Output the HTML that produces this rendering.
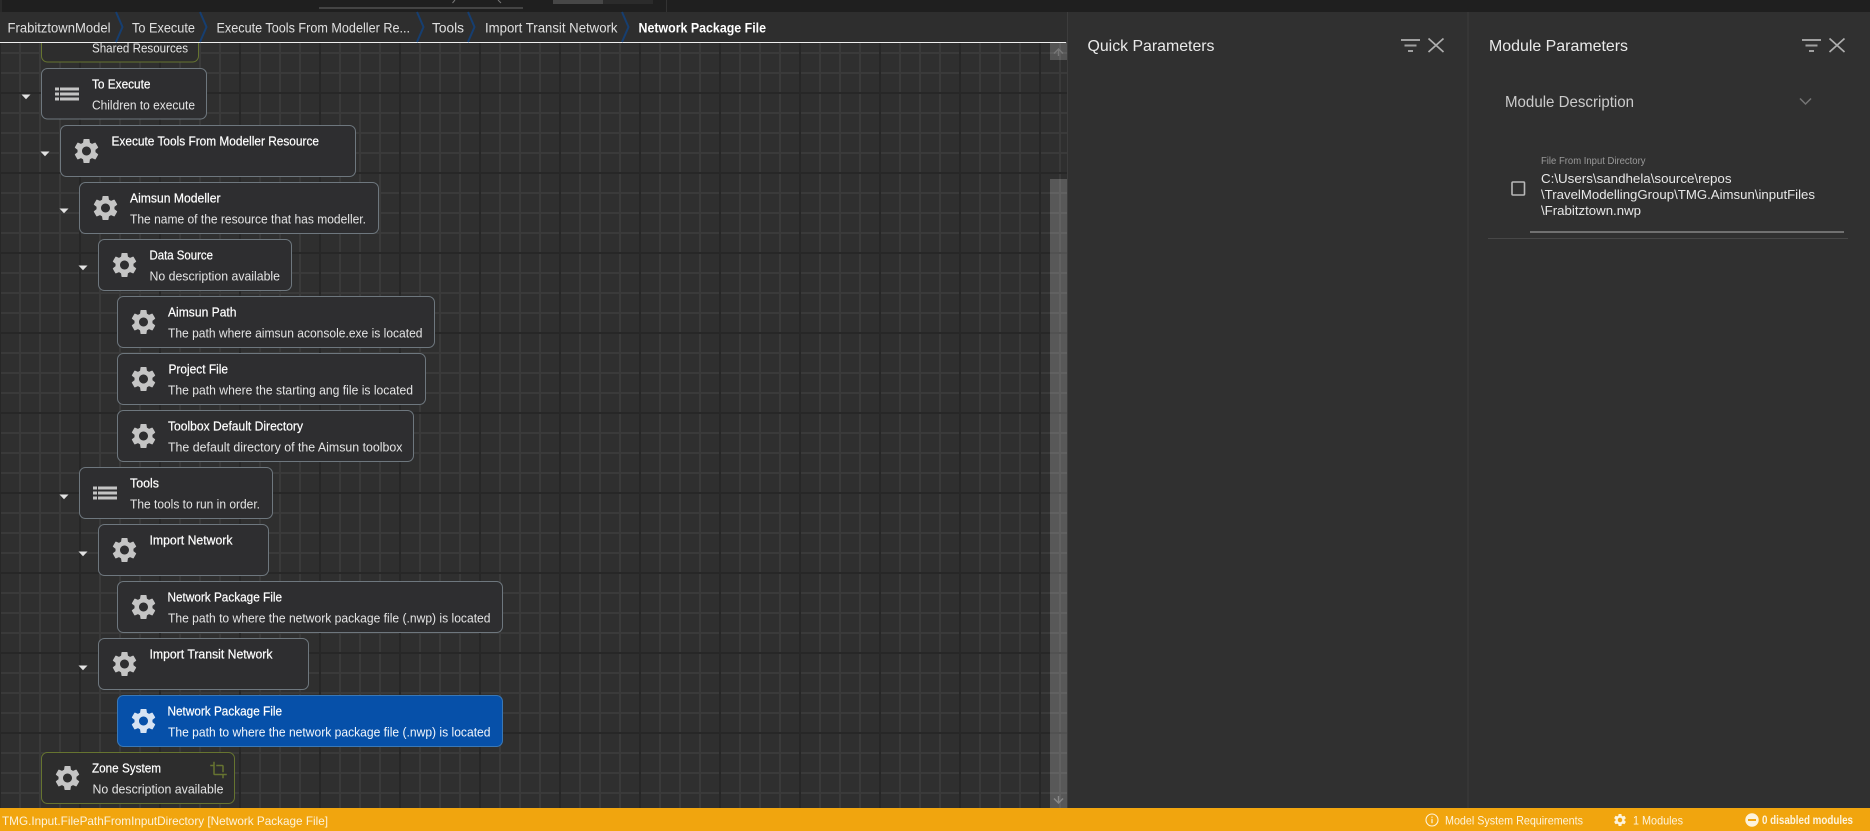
<!DOCTYPE html>
<html lang="en"><head><meta charset="utf-8"><title>Network Package File</title>
<style>
html,body{margin:0;padding:0;width:1870px;height:831px;overflow:hidden;background:#303030}
svg{display:block}
text{font-family:"Liberation Sans",sans-serif;white-space:pre}
.t{font-size:12.5px;fill:#fff;stroke:#fff;stroke-width:.2}
.d{font-size:12.5px;fill:#e4e4e4}
.b{font-size:14px;fill:#e0e0e0}
.p{font-size:16px;fill:#eaeaea}
.s{font-size:12px;fill:#fdf3dc}
.n{fill:#2e2e30;stroke:#6e777e;stroke-width:1}
.o{fill:#2d2d2d;stroke:#667430;stroke-width:1}
</style></head>
<body>
<svg xmlns="http://www.w3.org/2000/svg" width="1870" height="831" viewBox="0 0 1870 831">
<defs>
<pattern id="grid" x="0" y="13" width="80" height="80" patternUnits="userSpaceOnUse">
<rect width="80" height="80" fill="#2f2f2f"/>
<rect x="19" width="2" height="80" fill="#3a3a3a"/><rect x="39" width="2" height="80" fill="#3a3a3a"/><rect x="59" width="2" height="80" fill="#3a3a3a"/>
<rect y="19" width="80" height="2" fill="#3a3a3a"/><rect y="39" width="80" height="2" fill="#3a3a3a"/><rect y="59" width="80" height="2" fill="#3a3a3a"/>
<rect x="79" width="1" height="80" fill="#272727"/><rect x="0" width="1" height="80" fill="#272727"/>
<rect y="79" width="80" height="1" fill="#272727"/><rect y="0" width="80" height="1" fill="#272727"/>
</pattern>
<g id="g" transform="scale(1.25) translate(-12,-12)"><path d="M19.14 12.94c.04-.3.06-.61.06-.94 0-.32-.02-.64-.07-.94l2.03-1.58c.18-.14.23-.41.12-.61l-1.92-3.32c-.12-.22-.37-.29-.59-.22l-2.39.96c-.5-.38-1.03-.7-1.62-.94l-.36-2.54c-.04-.24-.24-.41-.48-.41h-3.84c-.24 0-.43.17-.47.41l-.36 2.54c-.59.24-1.13.57-1.62.94l-2.39-.96c-.22-.08-.47 0-.59.22L2.74 8.87c-.12.21-.08.47.12.61l2.03 1.58c-.05.3-.09.63-.09.94s.02.64.07.94l-2.03 1.58c-.18.14-.23.41-.12.61l1.92 3.32c.12.22.37.29.59.22l2.39-.96c.5.38 1.03.7 1.62.94l.36 2.54c.05.24.24.41.48.41h3.84c.24 0 .44-.17.47-.41l.36-2.54c.59-.24 1.13-.56 1.62-.94l2.39.96c.22.08.47 0 .59-.22l1.92-3.32c.12-.22.07-.47-.12-.61l-2.01-1.58zM12 15.6c-1.98 0-3.6-1.62-3.6-3.6s1.62-3.6 3.6-3.6 3.6 1.62 3.6 3.6-1.62 3.6-3.6 3.6z"/></g>
<g id="l"><rect x="-12" y="-6.5" width="4" height="3"/><rect x="-7" y="-6.5" width="19" height="3"/><rect x="-12" y="-1.5" width="4" height="3"/><rect x="-7" y="-1.5" width="19" height="3"/><rect x="-12" y="3.5" width="4" height="3"/><rect x="-7" y="3.5" width="19" height="3"/></g>
<path id="a" d="M-4.5 0H4.5L0 4.8Z" fill="#e2e2e2"/>
<g id="f" fill="#a0a0a0"><rect x="0" y="0" width="19" height="2"/><rect x="3.5" y="5.5" width="12" height="2"/><rect x="7" y="11" width="5" height="2"/></g>
<path id="x" d="M0 0L15 13.5M15 0L0 13.5" stroke="#aeaeae" stroke-width="1.7" fill="none"/>
<path id="c" d="M-3 0L3.5 15L-3 30" fill="none" stroke="#163e70" stroke-width="2"/>
</defs>

<rect width="1870" height="831" fill="#303030"/>
<rect x="0" y="12" width="1067" height="796" fill="url(#grid)"/>

<g>
<rect class="o" x="41.5" y="11.5" width="157" height="50.5" rx="6"/>
<rect class="n" x="41.5" y="68.5" width="165" height="50.5" rx="6"/>
<rect class="n" x="60.5" y="125.5" width="295" height="51" rx="6"/>
<rect class="n" x="79.5" y="182.5" width="299" height="51" rx="6"/>
<rect class="n" x="98.5" y="239.5" width="193" height="51" rx="6"/>
<rect class="n" x="117.5" y="296.5" width="317" height="51" rx="6"/>
<rect class="n" x="117.5" y="353.5" width="308" height="51" rx="6"/>
<rect class="n" x="117.5" y="410.5" width="296" height="51" rx="6"/>
<rect class="n" x="79.5" y="467.5" width="193" height="51" rx="6"/>
<rect class="n" x="98.5" y="524.5" width="170" height="51" rx="6"/>
<rect class="n" x="117.5" y="581.5" width="385" height="51" rx="6"/>
<rect class="n" x="98.5" y="638.5" width="210" height="51" rx="6"/>
<rect x="117.5" y="695.5" width="385" height="51" rx="6" fill="#0650a9" stroke="#3a78b6"/>
<rect class="o" x="41.5" y="752.5" width="193" height="51" rx="6"/>
</g>

<g fill="#c4c4c4">
<use href="#l" x="67" y="94"/>
<use href="#g" x="86.5" y="151"/>
<use href="#g" x="105.5" y="208"/>
<use href="#g" x="124.5" y="265"/>
<use href="#g" x="143.5" y="322"/>
<use href="#g" x="143.5" y="379"/>
<use href="#g" x="143.5" y="436"/>
<use href="#l" x="105" y="493"/>
<use href="#g" x="124.5" y="550"/>
<use href="#g" x="143.5" y="607"/>
<use href="#g" x="124.5" y="664"/>
<use href="#g" x="67.5" y="778"/>
</g>
<use href="#g" x="143.5" y="721" fill="#d6e3f3"/>
<path transform="translate(209.5,761) scale(.75)" fill="#667430" d="M17,15H19V7C19,5.9 18.1,5 17,5H9V7H17V15M7,17V1H5V5H1V7H5V17A2,2 0 0,0 7,19H17V23H19V19H23V17H7Z"/>

<use href="#a" x="26" y="94.5"/>
<use href="#a" x="45" y="151.5"/>
<use href="#a" x="64" y="208.5"/>
<use href="#a" x="83" y="265.5"/>
<use href="#a" x="64" y="494.5"/>
<use href="#a" x="83" y="551.5"/>
<use href="#a" x="83" y="665.5"/>

<text class="d" x="92" y="52.5" textLength="96" lengthAdjust="spacingAndGlyphs">Shared Resources</text>
<text class="t" x="92" y="88.5" textLength="58.5" lengthAdjust="spacingAndGlyphs">To Execute</text>
<text class="d" x="92" y="109.5" textLength="103" lengthAdjust="spacingAndGlyphs">Children to execute</text>
<text class="t" x="111.5" y="145.5" textLength="207.5" lengthAdjust="spacingAndGlyphs">Execute Tools From Modeller Resource</text>
<text class="t" x="130" y="202.5" textLength="90.5" lengthAdjust="spacingAndGlyphs">Aimsun Modeller</text>
<text class="d" x="130" y="223.5" textLength="236" lengthAdjust="spacingAndGlyphs">The name of the resource that has modeller.</text>
<text class="t" x="149.5" y="259.5" textLength="63.5" lengthAdjust="spacingAndGlyphs">Data Source</text>
<text class="d" x="149.5" y="280.5" textLength="130.5" lengthAdjust="spacingAndGlyphs">No description available</text>
<text class="t" x="168" y="316.5" textLength="68.5" lengthAdjust="spacingAndGlyphs">Aimsun Path</text>
<text class="d" x="168" y="337.5" textLength="254.5" lengthAdjust="spacingAndGlyphs">The path where aimsun aconsole.exe is located</text>
<text class="t" x="168.5" y="373.5" textLength="59.5" lengthAdjust="spacingAndGlyphs">Project File</text>
<text class="d" x="168" y="394.5" textLength="245" lengthAdjust="spacingAndGlyphs">The path where the starting ang file is located</text>
<text class="t" x="168" y="430.5" textLength="135" lengthAdjust="spacingAndGlyphs">Toolbox Default Directory</text>
<text class="d" x="168" y="451.5" textLength="234.5" lengthAdjust="spacingAndGlyphs">The default directory of the Aimsun toolbox</text>
<text class="t" x="130" y="487.5" textLength="29" lengthAdjust="spacingAndGlyphs">Tools</text>
<text class="d" x="130" y="508.5" textLength="130" lengthAdjust="spacingAndGlyphs">The tools to run in order.</text>
<text class="t" x="149.5" y="544.5" textLength="83" lengthAdjust="spacingAndGlyphs">Import Network</text>
<text class="t" x="167.5" y="601.5" textLength="114.5" lengthAdjust="spacingAndGlyphs">Network Package File</text>
<text class="d" x="168" y="622.5" textLength="322.5" lengthAdjust="spacingAndGlyphs">The path to where the network package file (.nwp) is located</text>
<text class="t" x="149.5" y="658.5" textLength="123" lengthAdjust="spacingAndGlyphs">Import Transit Network</text>
<text class="t" x="167.5" y="715.5" textLength="114.5" lengthAdjust="spacingAndGlyphs">Network Package File</text>
<text class="d" x="168" y="736.5" textLength="322.5" lengthAdjust="spacingAndGlyphs" style="fill:#f2f6fb">The path to where the network package file (.nwp) is located</text>
<text class="t" x="92" y="772.5" textLength="69" lengthAdjust="spacingAndGlyphs">Zone System</text>
<text class="d" x="92.5" y="793.5" textLength="131" lengthAdjust="spacingAndGlyphs">No description available</text>

<rect x="1050" y="42" width="17" height="18" fill="#fff" opacity=".18"/>
<path d="M1054 53.5L1058.5 49L1063 53.5M1058.5 49V56" fill="none" stroke="#777" stroke-width="1.4"/>
<rect x="1050" y="179" width="17" height="629" fill="#fff" opacity=".2"/>
<path d="M1054 798.5L1058.5 803L1063 798.5M1058.5 803V796" fill="none" stroke="#888" stroke-width="1.4"/>

<rect width="1870" height="12" fill="#1f1f1f"/>
<rect width="2" height="12" fill="#2a2a2a"/>
<rect x="319" y="7.5" width="204" height="1" fill="#6a6a6a"/>
<path d="M455 0L452.5 3M498 0L501 3" stroke="#777" stroke-width="1" fill="none"/>
<rect x="553" y="0" width="50" height="4" fill="#474747"/>
<rect x="603" y="0" width="50" height="4" fill="#2b2b2b"/>
<rect x="666" y="0" width="1" height="12" fill="#333"/>

<rect x="0" y="12" width="1067" height="30" fill="#2e2e2e"/>
<rect x="0" y="42" width="1066" height="1" fill="#eeeeee"/>
<text class="b" x="7.5" y="32.5" textLength="103" lengthAdjust="spacingAndGlyphs">FrabitztownModel</text>
<use href="#c" x="119" y="12"/>
<text class="b" x="132" y="32.5" textLength="63" lengthAdjust="spacingAndGlyphs">To Execute</text>
<use href="#c" x="203" y="12"/>
<text class="b" x="216.5" y="32.5" textLength="193.5" lengthAdjust="spacingAndGlyphs">Execute Tools From Modeller Re...</text>
<use href="#c" x="420" y="12"/>
<text class="b" x="432" y="32.5" textLength="32" lengthAdjust="spacingAndGlyphs">Tools</text>
<use href="#c" x="471" y="12"/>
<text class="b" x="485" y="32.5" textLength="132.5" lengthAdjust="spacingAndGlyphs">Import Transit Network</text>
<use href="#c" x="625" y="12"/>
<text class="b" x="638.5" y="32.5" textLength="127.5" lengthAdjust="spacingAndGlyphs" style="font-weight:bold;fill:#fff">Network Package File</text>

<rect x="1067" y="12" width="1" height="796" fill="#3d3d3d"/>
<rect x="1467.5" y="12" width="1" height="796" fill="#3b3b3b"/>
<text class="p" x="1087.5" y="51" textLength="127" lengthAdjust="spacingAndGlyphs">Quick Parameters</text>
<use href="#f" x="1401" y="39"/>
<use href="#x" x="1428.5" y="38.5"/>
<text class="p" x="1489" y="51" textLength="139" lengthAdjust="spacingAndGlyphs">Module Parameters</text>
<use href="#f" x="1802" y="39"/>
<use href="#x" x="1829.5" y="38.5"/>
<text class="p" x="1505" y="107" textLength="129" lengthAdjust="spacingAndGlyphs" style="fill:#cbcbcb">Module Description</text>
<path d="M1800 98.5L1805.5 104L1811 98.5" fill="none" stroke="#757575" stroke-width="1.5"/>
<text x="1541" y="164" font-size="10" fill="#9a9a9a" textLength="104.5" lengthAdjust="spacingAndGlyphs">File From Input Directory</text>
<text x="1541" y="183" font-size="13" fill="#e8e8e8" textLength="190.5" lengthAdjust="spacingAndGlyphs">C:\Users\sandhela\source\repos</text>
<text x="1541" y="199" font-size="13" fill="#e8e8e8" textLength="274" lengthAdjust="spacingAndGlyphs">\TravelModellingGroup\TMG.Aimsun\inputFiles</text>
<text x="1541" y="215" font-size="13" fill="#e8e8e8" textLength="100" lengthAdjust="spacingAndGlyphs">\Frabitztown.nwp</text>
<rect x="1512" y="182" width="12.5" height="13" rx="1" fill="none" stroke="#b8b8b8" stroke-width="1.6"/>
<rect x="1530" y="231.5" width="314" height="1" fill="#b0b0b0"/>
<rect x="1488" y="238" width="360" height="1" fill="#474747"/>

<rect x="0" y="808" width="1870" height="23" fill="#f1a50e"/>
<text class="s" x="2" y="825" font-size="12.5" textLength="326" lengthAdjust="spacingAndGlyphs">TMG.Input.FilePathFromInputDirectory [Network Package File]</text>
<circle cx="1432" cy="820" r="6" fill="none" stroke="#fdf3dc" stroke-width="1.1"/>
<rect x="1431.4" y="818.8" width="1.2" height="4.4" fill="#fdf3dc"/><rect x="1431.4" y="816.6" width="1.2" height="1.2" fill="#fdf3dc"/>
<text class="s" x="1445" y="824.5" textLength="138" lengthAdjust="spacingAndGlyphs">Model System Requirements</text>
<use href="#g" transform="translate(1620,820) scale(.5)" fill="#fdf3dc"/>
<text class="s" x="1633" y="824.5" textLength="50" lengthAdjust="spacingAndGlyphs">1 Modules</text>
<circle cx="1752" cy="820" r="6.7" fill="#fdf3dc"/><rect x="1748" y="819" width="8" height="2" fill="#f1a50e"/>
<text class="s" x="1762" y="824" font-size="11" textLength="91" lengthAdjust="spacingAndGlyphs" style="font-weight:bold">0 disabled modules</text>
</svg>
</body></html>
